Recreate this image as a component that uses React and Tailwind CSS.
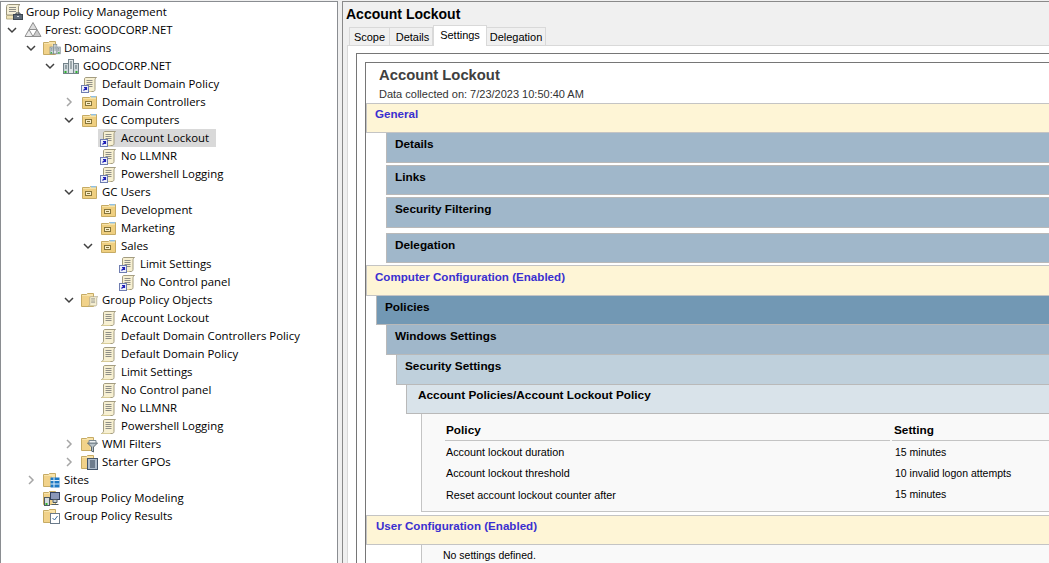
import React from "react";

const Chev = ({ open }) => (
  <svg width="10" height="10" viewBox="0 0 10 10" fill="none" stroke={open ? "#404040" : "#a6a6a6"} strokeWidth="1.5">
    {open ? <path d="M1 3l4 4 4-4" /> : <path d="M3 1l4 4-4 4" />}
  </svg>
);

const ScrollBody = () => (
  <g>
    <path d="M5 2.5h10.5c-1 .6-1.5 1.4-1.5 2.5v9.5c0 1.2-.8 2-2 2H1.5c1.2-.5 2-1.2 2-2.5V4c0-1 .6-1.5 1.5-1.5z" fill="#f7f0d2" stroke="#a39c80" />
    <path d="M5.5 5.5h6M5.5 7.5h6M5.5 9.5h6M5.5 11.5h6" stroke="#8f8f88" />
    <path d="M1.5 16.5h9" stroke="#d8cc98" />
  </g>
);

const Scroll = ({ link }) => (
  <svg width="18" height="18" viewBox="0 0 18 18">
    <ScrollBody />
    {link && (
      <g>
        <rect x="0.5" y="10.5" width="7" height="7" fill="#eef1fa" stroke="#6f7db0" />
        <path d="M2.5 15.5l2.5-2.5M3 12.5h2.5V15" stroke="#2020b8" strokeWidth="1.2" fill="none" />
      </g>
    )}
  </svg>
);

const FolderBack = () => (
  <g>
    <path d="M1.5 4.5v11h14v-12h-6l-1 1z" fill="#f7e2a6" stroke="#c6ab64" />
    <rect x="2" y="6" width="13" height="9" fill="#efcf80" />
    <path d="M10 3h5v1.4h-5z" fill="#8fc0e6" />
  </g>
);

const OU = () => (
  <svg width="18" height="18" viewBox="0 0 18 18">
    <FolderBack />
    <rect x="4.5" y="8.5" width="6" height="4" fill="#f9eec8" stroke="#85743a" />
    <path d="M6 10.5h3" stroke="#85743a" />
  </svg>
);

const Folder = ({ children }) => (
  <svg width="18" height="18" viewBox="0 0 18 18">
    <path d="M.5 3.5h5l1-1h6v13H.5z" fill="#f8e3aa" stroke="#c6ab64" />
    <rect x="1" y="5" width="8" height="10" fill="#f1d28a" />
    {children}
  </svg>
);

const ServerBody = () => (
  <g>
    <rect x="1.5" y="6.5" width="5" height="10" fill="#cdd6da" stroke="#74838a" />
    <rect x="11.5" y="6.5" width="5" height="10" fill="#cdd6da" stroke="#74838a" />
    <rect x="6.5" y="2.5" width="5" height="14" fill="#e2e8ea" stroke="#74838a" />
    <path d="M8 5h2M8 7h2M8 9h2M8 11h2M3 9h2M3 11h2M13 9h2M13 11h2" stroke="#5b6a70" />
    <rect x="2.5" y="14" width="2" height="2" fill="#30b030" />
    <rect x="13.5" y="14" width="2" height="2" fill="#30b030" />
  </g>
);

const Gpm = () => (
  <svg width="18" height="18" viewBox="0 0 18 18">
    <path d="M3.5 1.5h11.5c-1 .6-1.5 1.4-1.5 2.5v8H1.5V3.5c0-1 1-2 2-2z" fill="#f5efd6" stroke="#9a947c" />
    <path d="M4 4.5h7M4 6.5h7M4 8.5h7" stroke="#8f8f88" />
    <path d="M1.5 12.5h8v3.5h-8z" fill="#efe3b4" stroke="#b8ae88" />
    <rect x="8.5" y="11.5" width="9" height="5" fill="#5e6b78" stroke="#3c4650" />
    <path d="M11 11.5V10h4v1.5" fill="none" stroke="#3c4650" />
    <path d="M12 13.5h2" stroke="#d9dde0" />
  </svg>
);

const Forest = () => (
  <svg width="18" height="18" viewBox="0 0 18 18">
    <path d="M9 1.5l4 7H5z" fill="#dcdcdc" stroke="#8f8f8f" />
    <path d="M5 8.5l4 7H1z" fill="#ececec" stroke="#8f8f8f" />
    <path d="M13 8.5l4 7H9z" fill="#c9c9c9" stroke="#8f8f8f" />
  </svg>
);

const ICONS = {
  gpm: <Gpm />,
  forest: <Forest />,
  domains: <Folder><g transform="translate(6 3.6) scale(.68)"><ServerBody /></g></Folder>,
  domain: <svg width="18" height="18" viewBox="0 0 18 18"><ServerBody /></svg>,
  link: <Scroll link />,
  gpo: <Scroll />,
  ou: <OU />,
  gpos: <Folder><g transform="translate(6.5 4) scale(.66)"><ScrollBody /></g></Folder>,
  wmi: <Folder><path d="M6.5 8h10l-4 4v5l-2-1v-4z" fill="#b8c2c8" stroke="#5b6870" /><path d="M8 5.5h7v2.5H8z" fill="#eef1f3" stroke="#7b8890" /></Folder>,
  starter: <Folder><rect x="6.5" y="5.5" width="10" height="11" fill="#aebccb" stroke="#44556a" /><path d="M9 8h5M9 10h5M9 12h5M9 14h5" stroke="#2d3c4f" /></Folder>,
  sites: <Folder><rect x="7.5" y="6.5" width="9" height="10" fill="#1c79c4" /><path d="M7.5 9.5h9M7.5 13h9M11 6.5v10" stroke="#dceefa" /></Folder>,
  model: <Folder><rect x="7.5" y="3.5" width="9" height="7" fill="#8a97b8" stroke="#33415f" /><rect x="1.5" y="8.5" width="5" height="8" fill="#d5dce0" stroke="#4f5b62" /><rect x="2.5" y="14" width="2" height="2" fill="#30b030" /><path d="M10 10.5h4v3h-4zM8.5 15.5h7" stroke="#4f5b62" fill="#c8ced4" /></Folder>,
  results: <Folder><rect x="7.5" y="6.5" width="9" height="10" fill="#fff" stroke="#6a7a8a" /><path d="M9.5 11l2 2 3-4" stroke="#3a6a9a" fill="none" /></Folder>,
};

const TREE = [
  [0, null, "gpm", "Group Policy Management"],
  [1, "o", "forest", "Forest: GOODCORP.NET"],
  [2, "o", "domains", "Domains"],
  [3, "o", "domain", "GOODCORP.NET"],
  [4, null, "link", "Default Domain Policy"],
  [4, "c", "ou", "Domain Controllers"],
  [4, "o", "ou", "GC Computers"],
  [5, null, "link", "Account Lockout", true],
  [5, null, "link", "No LLMNR"],
  [5, null, "link", "Powershell Logging"],
  [4, "o", "ou", "GC Users"],
  [5, null, "ou", "Development"],
  [5, null, "ou", "Marketing"],
  [5, "o", "ou", "Sales"],
  [6, null, "link", "Limit Settings"],
  [6, null, "link", "No Control panel"],
  [4, "o", "gpos", "Group Policy Objects"],
  [5, null, "gpo", "Account Lockout"],
  [5, null, "gpo", "Default Domain Controllers Policy"],
  [5, null, "gpo", "Default Domain Policy"],
  [5, null, "gpo", "Limit Settings"],
  [5, null, "gpo", "No Control panel"],
  [5, null, "gpo", "No LLMNR"],
  [5, null, "gpo", "Powershell Logging"],
  [4, "c", "wmi", "WMI Filters"],
  [4, "c", "starter", "Starter GPOs"],
  [2, "c", "sites", "Sites"],
  [2, null, "model", "Group Policy Modeling"],
  [2, null, "results", "Group Policy Results"],
];

const INDENT = {
  0: "pl-[4px]", 1: "pl-[23px]", 2: "pl-[42px]", 3: "pl-[61px]", 4: "pl-[80px]", 5: "pl-[99px]", 6: "pl-[118px]",
};

function Row({ level, exp, icon, text, sel }) {
  return (
    <div className={`relative flex h-[18px] items-center ${INDENT[level]}`}>
      {exp && (
        <span className="absolute top-[4px]" style={{ left: 19 * level - 13 }}>
          <Chev open={exp === "o"} />
        </span>
      )}
      <span className="relative flex items-center">
        {sel && <span className="absolute left-[-2px] top-0 h-[18px] w-[118px] bg-[#d9d9d9]" />}
        <span className="relative h-[18px] w-[18px]">{ICONS[icon]}</span>
        <span className="relative ml-[3px] whitespace-nowrap text-[11.4px] leading-[18px] text-black">{text}</span>
      </span>
    </div>
  );
}

const Band = ({ className, children }) => (
  <div className={`whitespace-nowrap border-b border-l border-[#b9b9b9] text-[11.8px] font-bold leading-[14px] text-black ${className}`}>
    {children}
  </div>
);

const Yellow = ({ className, children }) => (
  <div className={`border-y border-l border-[#c4c4c4] bg-[#fef5d6] text-[11.6px] font-bold leading-[14px] text-[#3a2fd0] ${className}`}>
    {children}
  </div>
);

const Tab = ({ className, children }) => (
  <div className={`flex h-[18px] items-center justify-center border border-b-0 border-[#d9d9d9] bg-[#f0f0f0] pt-px ${className}`}>{children}</div>
);

export default function App() {
  return (
    <div className="flex h-[563px] w-[1049px] overflow-hidden bg-[#f0f0f0] font-['Open_Sans','Noto_Sans',sans-serif]">
      <div className="mt-px w-[338px] shrink-0 border-x border-t border-[#8a8d91] bg-white pt-[1px]">
        {TREE.map(([level, exp, icon, text, sel]) => (
          <Row key={icon + text} level={level} exp={exp} icon={icon} text={text} sel={sel} />
        ))}
      </div>
      <div className="ml-[4px] mt-px flex-1 border-l border-t border-[#8a8a8a] font-['Liberation_Sans',sans-serif]">
        <div className="pl-[3px] pt-[4px] text-[14px] font-bold leading-[17px] text-black">Account Lockout</div>
        <div className="flex h-[22px] items-end pl-[6px] text-[11px] text-black">
          <Tab className="w-[41px]">Scope</Tab>
          <Tab className="w-[43px] border-l-0 pl-[3px]">Details</Tab>
          <div className="z-10 -mb-px flex h-[21px] w-[54px] justify-center border border-b-0 border-[#d9d9d9] bg-white pt-[1px]">Settings</div>
          <Tab className="w-[59px] border-l-0">Delegation</Tab>
        </div>
        <div className="ml-[4px] h-[518px] border-l border-t border-[#d9d9d9] bg-white pl-[8px] pt-[7px]">
          <div className="h-full border-l border-t border-[#767676] pl-[8px] pt-[8px]">
            <div className="h-full border-l border-t border-[#767676]">
              <div className="pl-[13px] pt-[3px] text-[14.8px] font-bold leading-[18px] text-[#404040]">Account Lockout</div>
              <div className="pl-[13px] pt-[4px] text-[11px] leading-[13px] text-[#333]">Data collected on: 7/23/2023 10:50:40 AM</div>
              <Yellow className="mt-[2px] h-[30px] pl-[8px] pt-[3px]">General</Yellow>
              <Band className="ml-[20px] h-[30px] bg-[#a0b7ca] pl-[8px] pt-[4px]">Details</Band>
              <Band className="ml-[20px] mt-[2px] h-[30px] border-t bg-[#a0b7ca] pl-[8px] pt-[4px]">Links</Band>
              <Band className="ml-[20px] mt-[2px] h-[31px] border-t bg-[#a0b7ca] pl-[8px] pt-[4px]">Security Filtering</Band>
              <Band className="ml-[20px] mt-[5px] h-[30px] border-t bg-[#a0b7ca] pl-[8px] pt-[4px]">Delegation</Band>
              <Yellow className="mt-[2px] h-[31px] pl-[8px] pt-[4px]">Computer Configuration (Enabled)</Yellow>
              <Band className="ml-[10px] h-[29px] bg-[#7298b4] pl-[8px] pt-[4px]">Policies</Band>
              <Band className="ml-[20px] h-[30px] bg-[#a0b7ca] pl-[8px] pt-[4px]">Windows Settings</Band>
              <Band className="ml-[30px] h-[30px] bg-[#bfd0dc] pl-[8px] pt-[4px]">Security Settings</Band>
              <Band className="ml-[40px] h-[29px] bg-[#d9e3ea] pl-[11px] pt-[3px]">Account Policies/Account Lockout Policy</Band>
              <div className="ml-[55px] h-[98px] border-b border-l border-[#c4c4c4] bg-[#f9f9f9] pl-[23px] pt-[9px] text-[10.8px] text-black">
                <div className="flex h-[18px] text-[11.8px] font-bold leading-[15px]">
                  <div className="w-[445px] border-b border-[#c4c4c4] pl-px">Policy</div>
                  <div className="ml-[2px] flex-1 border-b border-[#c4c4c4] pl-[2px]">Setting</div>
                </div>
                <div className="mt-px flex h-[21px] items-center pl-px"><div className="w-[449px]">Account lockout duration</div><div className="text-[10.5px]">15 minutes</div></div>
                <div className="flex h-[21px] items-center pl-px"><div className="w-[449px]">Account lockout threshold</div><div className="text-[10.5px]">10 invalid logon attempts</div></div>
                <div className="flex h-[22px] items-center pl-px"><div className="w-[449px]">Reset account lockout counter after</div><div className="text-[10.5px]">15 minutes</div></div>
              </div>
              <Yellow className="mt-[3px] h-[30px] pl-[9px] pt-[3px]">User Configuration (Enabled)</Yellow>
              <div className="ml-[55px] h-[40px] border-l border-[#c4c4c4] bg-[#f9f9f9] pl-[21px] pt-[3px] text-[10.5px] leading-[14px] text-black">No settings defined.</div>
            </div>
          </div>
        </div>
      </div>
    </div>
  );
}
